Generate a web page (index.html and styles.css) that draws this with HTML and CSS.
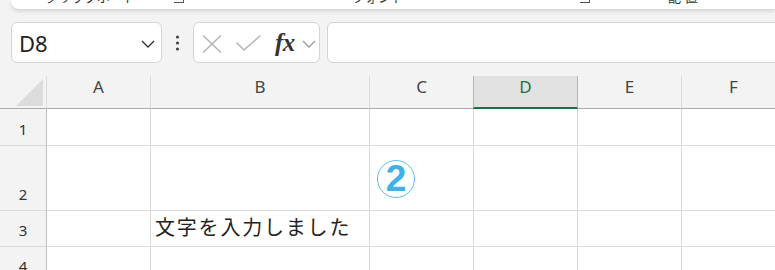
FILE: index.html
```html
<!DOCTYPE html>
<html lang="ja">
<head>
  <meta charset="UTF-8" />
  <meta name="viewport" content="width=device-width, initial-scale=1.0"/>
  <title>Excel - 文字入力</title>
  <link rel="stylesheet" href="styles.css">
</head>
<body>
  <div class="ribbon">
    <div class="ribbon-labels">
      <span class="group clip">クリップボード</span>
      <span class="launcher l1"></span>
      <span class="group font">フォント</span>
      <span class="launcher l2"></span>
      <span class="group align">配置</span>
    </div>
  </div>

  <div class="formula-bar">
    <div class="name-box">
      <span class="name">D8</span>
      <svg class="chev" width="14" height="8" viewBox="0 0 14 8"><path d="M1 1 L7 7 L13 1" fill="none" stroke="#333" stroke-width="1.4"/></svg>
    </div>
    <div class="more">
      <svg width="5" height="16" viewBox="0 0 5 16"><circle cx="2.5" cy="2" r="1.6" fill="#444"/><circle cx="2.5" cy="8" r="1.6" fill="#444"/><circle cx="2.5" cy="14" r="1.6" fill="#444"/></svg>
    </div>
    <div class="fx-box">
      <svg class="icon-x" width="20" height="18" viewBox="0 0 20 18"><path d="M1 0.5 L19 17.5 M19 0.5 L1 17.5" stroke="#b4b4b4" stroke-width="1.5"/></svg>
      <svg class="icon-check" width="25" height="16" viewBox="0 0 25 16"><path d="M0.5 7.5 L8 15 L24.5 0.5" fill="none" stroke="#b4b4b4" stroke-width="1.5"/></svg>
      <span class="fx">fx</span>
      <svg class="chev-s" width="14" height="8" viewBox="0 0 14 8"><path d="M1 1 L7 7 L13 1" fill="none" stroke="#999" stroke-width="1.3"/></svg>
    </div>
    <div class="formula-input"></div>
  </div>

  <div class="sheet">
    <div class="corner">
      <svg width="47" height="33" viewBox="0 0 47 33"><polygon points="43,3 43,30 16,30" fill="#dcdcdc"/></svg>
    </div>
    <div class="col-head">A</div>
    <div class="col-head">B</div>
    <div class="col-head">C</div>
    <div class="col-head active">D</div>
    <div class="col-head">E</div>
    <div class="col-head">F</div>

    <div class="row-head r1">1</div>
    <div class="cell"></div>
    <div class="cell"></div>
    <div class="cell"></div>
    <div class="cell"></div>
    <div class="cell"></div>
    <div class="cell"></div>

    <div class="row-head r2">2</div>
    <div class="cell"></div>
    <div class="cell"></div>
    <div class="cell mark-cell"><span class="mark">2</span></div>
    <div class="cell"></div>
    <div class="cell"></div>
    <div class="cell"></div>

    <div class="row-head r3">3</div>
    <div class="cell"></div>
    <div class="cell text">文字を入力しました</div>
    <div class="cell"></div>
    <div class="cell"></div>
    <div class="cell"></div>
    <div class="cell"></div>

    <div class="row-head r4">4</div>
    <div class="cell"></div>
    <div class="cell"></div>
    <div class="cell"></div>
    <div class="cell"></div>
    <div class="cell"></div>
    <div class="cell"></div>
  </div>
</body>
</html>
```

FILE: styles.css
```css
html, body {
  margin: 0;
  padding: 0;
}
body {
  width: 775px;
  height: 270px;
  overflow: hidden;
  background: #f3f3f3;
  font-family: "Noto Sans", "Open Sans", "Noto Sans CJK JP", sans-serif;
  color: #333;
}

/* ribbon (cut off at the top) */
.ribbon {
  height: 9px;
  margin-left: 11px;
  background: #fff;
  border-radius: 0 0 0 8px;
  box-shadow: 0 2px 4px rgba(0, 0, 0, 0.14);
  overflow: hidden;
  position: relative;
}
.ribbon-labels {
  display: flex;
  align-items: flex-end;
  height: 14px;
  margin-top: -10px;
  font-family: "Noto Sans CJK JP", sans-serif;
  font-size: 13px;
  line-height: 14px;
  color: #333;
}
.group.clip {
  margin-left: 34px;
}
.launcher {
  width: 9px;
  height: 9px;
  border-right: 1px solid #555;
  border-bottom: 1px solid #555;
  margin-bottom: 1px;
}
.launcher.l1 {
  margin-left: 38px;
}
.group.font {
  margin-left: 168px;
}
.launcher.l2 {
  margin-left: 176px;
}
.group.align {
  margin-left: 78px;
  letter-spacing: 4px;
}

/* formula bar */
.formula-bar {
  display: flex;
  height: 41px;
  margin-top: 13px;
}
.name-box {
  width: 151px;
  margin-left: 11px;
  box-sizing: border-box;
  background: #fff;
  border: 1px solid #d4d4d4;
  border-radius: 6px;
  display: flex;
  align-items: center;
  justify-content: space-between;
  padding: 0 6px 0 7px;
}
.name {
  font-size: 22px;
  color: #222;
  padding-top: 1px;
}
.chev {
  margin-top: 2px;
}
.more {
  width: 31px;
  display: flex;
  align-items: center;
  justify-content: center;
  padding-top: 1px;
}
.fx-box {
  width: 127px;
  box-sizing: border-box;
  background: #fff;
  border: 1px solid #d4d4d4;
  border-radius: 6px;
  display: flex;
  align-items: center;
  padding-left: 8px;
}
.icon-x {
  margin-top: 2px;
}
.icon-check {
  margin-left: 14px;
  margin-top: 1px;
}
.fx {
  margin-left: 14px;
  font-family: "Liberation Serif", "DejaVu Serif", serif;
  font-style: italic;
  font-weight: bold;
  font-size: 25px;
  color: #333;
  letter-spacing: -0.5px;
}
.chev-s {
  margin-left: 7px;
  margin-top: 2px;
}
.formula-input {
  flex: 1;
  margin-left: 7px;
  margin-right: -20px;
  background: #fff;
  border: 1px solid #d4d4d4;
  border-radius: 6px;
}

/* sheet grid */
.sheet {
  margin-top: 13px;
  display: grid;
  grid-template-columns: 47px 104px 219px 104px 104px 104px 104px;
  grid-template-rows: 33px 37px 65px 36px 36px;
  background: #fff;
}
.corner {
  background: #f3f3f3;
  border-right: 1px solid #dadada;
  border-bottom: 1px solid #ababab;
}
.corner svg {
  display: block;
}
.col-head {
  background: #f3f3f3;
  box-sizing: border-box;
  border-right: 1px solid #dadada;
  border-bottom: 1px solid #ababab;
  text-align: center;
  font-size: 17px;
  line-height: 20px;
  padding-top: 1px;
  color: #444;
}
.col-head.active {
  background: #e1e1e1;
  color: #1e7145;
  border-left: 1px solid #b5b5b5;
  border-right: 1px solid #b5b5b5;
  border-bottom: 2px solid #1e7145;
  margin-left: -1px;
}
.row-head {
  background: #f3f3f3;
  box-sizing: border-box;
  border-right: 1px solid #bdbdbd;
  border-bottom: 1px solid #dadada;
  display: flex;
  align-items: flex-end;
  justify-content: center;
  padding-bottom: 7px;
  font-size: 15px;
  line-height: 18px;
  color: #333;
}
.cell {
  box-sizing: border-box;
  border-right: 1px solid #dadada;
  border-bottom: 1px solid #dadada;
}
.cell.text {
  display: flex;
  align-items: flex-end;
  padding: 0 0 7px 4px;
  font-family: "Noto Sans CJK JP", sans-serif;
  font-size: 20px;
  line-height: 24px;
  letter-spacing: 1.8px;
  color: #222;
  white-space: nowrap;
}
.mark-cell {
  display: flex;
  align-items: center;
  padding-left: 7px;
}
.mark {
  width: 38px;
  height: 38px;
  box-sizing: border-box;
  border: 1.5px solid #5ec0ec;
  border-radius: 50%;
  display: flex;
  align-items: center;
  justify-content: center;
  font-family: "Liberation Sans", Arial, sans-serif;
  font-weight: bold;
  font-size: 37px;
  line-height: 1;
  color: #3fb1e5;
  margin-top: 1px;
}
```
